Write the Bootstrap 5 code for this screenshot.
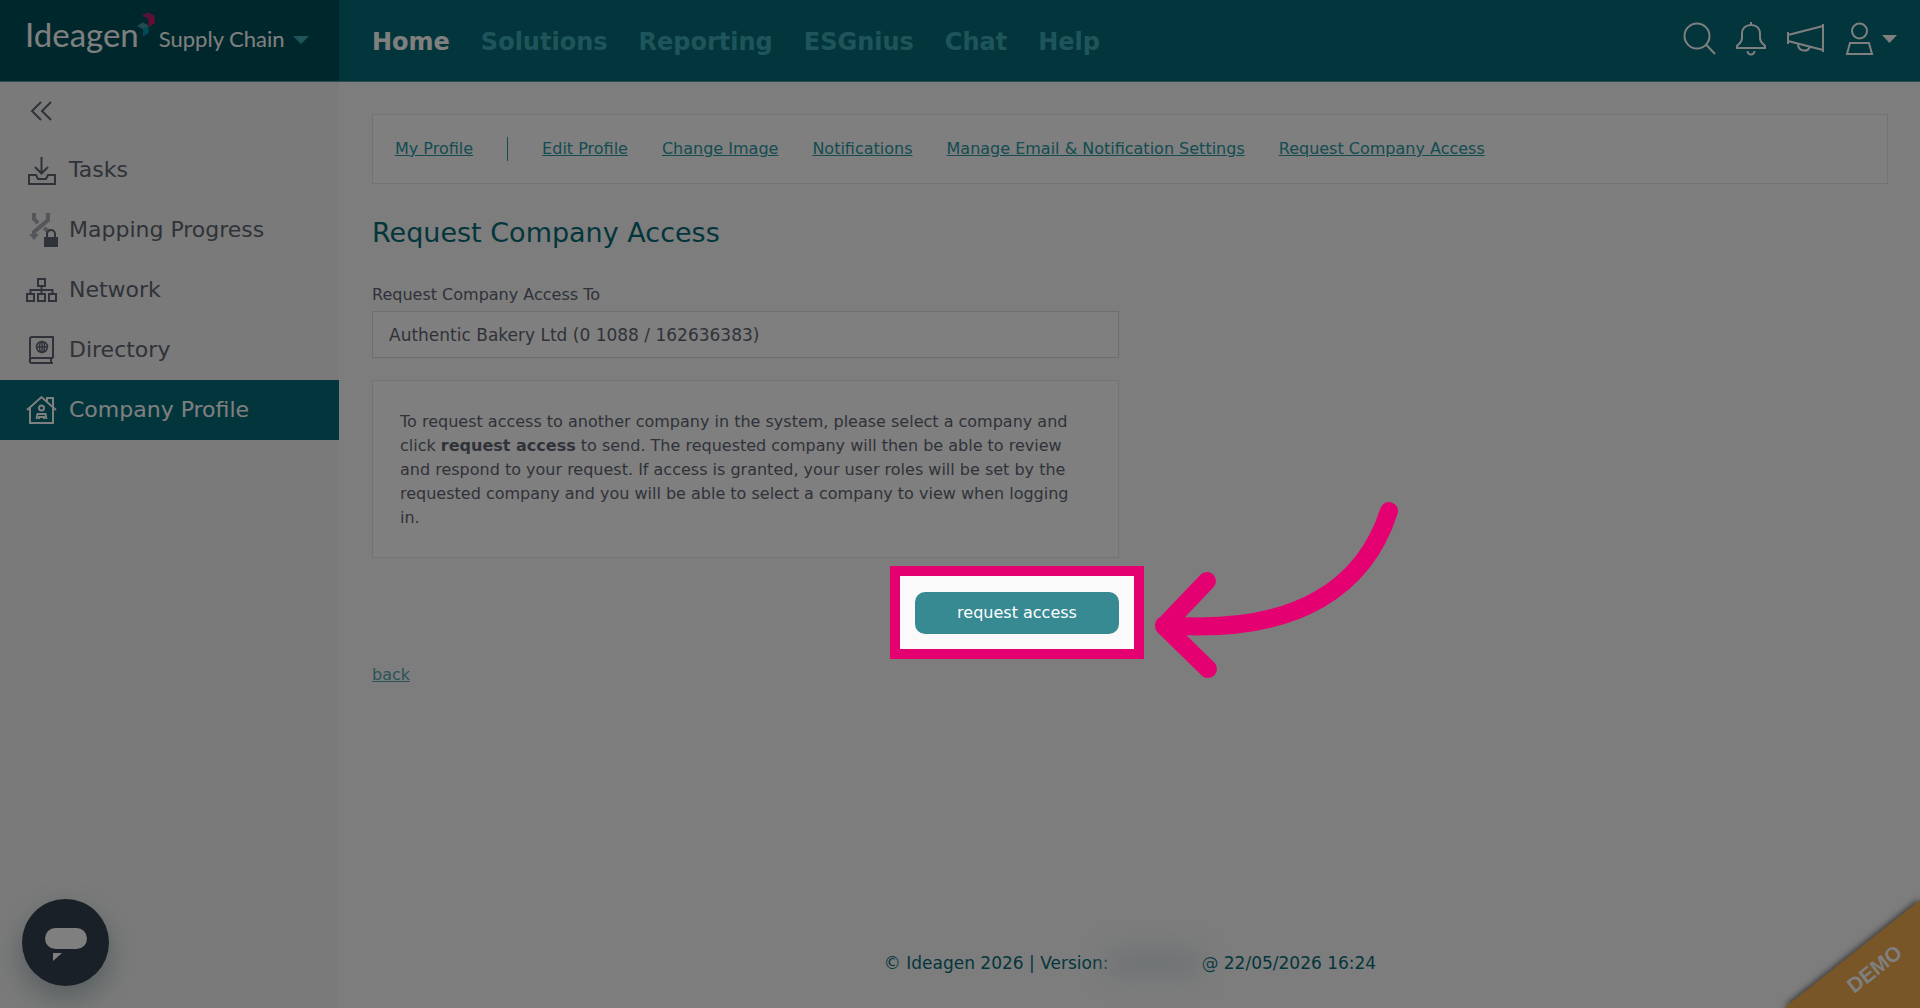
<!DOCTYPE html>
<html lang="en">
<head>
<meta charset="utf-8">
<meta name="viewport" content="width=device-width, initial-scale=1">
<title>Request Company Access</title>
<link href="https://cdn.jsdelivr.net/npm/bootstrap@5.3.0/dist/css/bootstrap.min.css" rel="stylesheet">
<style>
  :root { --teal: #378992; --bright: #3cabb4; --deep: #066c78; --ink: #5f6673; --line: #e6e6e6; }
  body { font-family: "DejaVu Sans", Verdana, sans-serif; font-size: 16px; line-height: 24px; color: var(--ink); background: #fafafa; }
  svg { fill: none; stroke: currentColor; display: block; flex: none; }
  svg.solid { stroke: none; }
  .topbar { height: 82px; background: var(--deep); border-bottom: 1px solid #509ca4; }
  .brand { width: 339px; background: #005058; color: #fff; text-decoration: none; font-family: Lato, sans-serif; padding: 11px 0 0 25px; }
  .brand-main { font-size: 33px; line-height: 40px; }
  .brand-sub { font-size: 22px; line-height: 32px; }
  .cubes { margin: 0 3px 0 -2px; }
  .topnav { gap: 31px; padding: 2px 0 0 33px; font-size: 24px; font-weight: 700; }
  .topnav a { color: var(--bright); text-decoration: none; }
  .topnav a.active { color: #fff; }
  .tools { gap: 20px; padding: 0 23px 3px 0; }
  .tools button, .fold { background: none; border: 0; padding: 0; color: #fff; }
  .side { width: 339px; background: #f4f4f4; }
  .fold { height: 58px; padding-left: 26px; color: var(--ink); }
  .side a { height: 60px; padding-left: 25px; gap: 10px; font-size: 22px; color: var(--ink); text-decoration: none; }
  .side a.active { background: var(--deep); color: #fff; }
  .content { padding: 32px 32px 30px 33px; }
  .subnav { background: #fff; border: 1px solid var(--line); gap: 10px 34px; padding: 22px; }
  .subnav a { color: #2898a4; }
  .rule { width: 1px; height: 24px; background: #2898a4; }
  h1 { font-size: 27px; line-height: 36px; color: var(--deep); margin: 31px 0 32px; }
  .request { max-width: 747px; }
  .request .form-label { margin-bottom: 4px; }
  .request .form-control { height: 47px; border-radius: 0; border-color: #dcdcdc; padding: 1px 16px 0; font-size: 17px; color: var(--ink); background: #fff; }
  .note { background: #fff; border: 1px solid var(--line); padding: 29px 27px 27px; margin: 22px 0 34px; }
  .spot { z-index: 50; width: 204px; }
  .spot::after { content: ""; position: absolute; inset: -26px -25px -25px; border: 10px solid #e50072; box-shadow: 0 0 0 4000px rgba(0,0,0,.5); pointer-events: none; }
  .spot .btn { height: 42px; padding: 0; font-size: 16px; color: #fff; background: var(--teal); border: 0; border-radius: 10px; }
  .spot svg { position: absolute; left: 235px; top: -97px; color: #e50072; z-index: 1; }
  .back { margin-top: 29px; color: #55a9b0; }
  .foot { color: var(--deep); font-size: 17px; }
  .smudge { width: 93px; height: 30px; background: #dfe6e9; filter: blur(12px); }
  .chat { position: fixed; left: 22px; bottom: 22px; width: 87px; height: 87px; border: 0; border-radius: 50%; background: #324150; z-index: 10; box-shadow: 0 12px 28px rgba(40,80,85,.35); color: #fff; padding: 4px 0 0; }
  .demo { position: fixed; right: 0; bottom: 0; z-index: 10; filter: drop-shadow(-1px -1px 3px rgba(0,0,0,.6)); }
  .demo text { font: 700 21px "Liberation Sans", Arial, sans-serif; }
</style>
</head>
<body class="d-flex flex-column min-vh-100">
<header class="topbar d-flex">
  <a class="brand d-flex align-items-baseline" href="#">
    <span class="brand-main">Ideagen</span>
    <svg class="cubes solid" width="19" height="36" viewBox="137 11 19 36"><path d="M142.500 15.500l5.500-3 6.500 3v8l-6 3.500v-8z" fill="#d0186c"/><path d="M142.500 15.500l5.500-3 6.500 3-6 3.500z" fill="#a8286e"/><path d="M137 26l6-3.500 5.500 3v7.500l-5.500 3.500v-7.500z" fill="#0098ac"/><path d="M137 26l6-3.500 5.500 3-5.500 3.500z" fill="#4496a0"/></svg>
    <span class="brand-sub">Supply Chain</span>
    <svg class="solid ms-2" width="16" height="12" viewBox="0 0 16 12"><path d="M0 1h16L8 9z" fill="#3cabb4"/></svg>
  </a>
  <nav class="topnav d-flex align-items-center">
    <a class="active" href="#">Home</a><a href="#">Solutions</a><a href="#">Reporting</a><a href="#">ESGnius</a><a href="#">Chat</a><a href="#">Help</a>
  </nav>
  <div class="tools d-flex align-items-center ms-auto">
    <button type="button" aria-label="Search"><svg width="34" height="34" viewBox="0 0 34 34" stroke-width="2"><circle cx="15" cy="14" r="12.500"/><path d="M24 22.500l9 9.500"/></svg></button>
    <button type="button" aria-label="Alerts"><svg width="30" height="34" viewBox="0 0 30 34" stroke-width="2"><path d="M15 0v3M1 26v-2c3-3 5-4 5-8v-4c0-6 4-9 9-9s9 3 9 9v4c0 4 2 5 5 8v2zM11.500 29a3.500 3.500 0 0 0 7 0"/></svg></button>
    <button type="button" aria-label="News"><svg width="39" height="34" viewBox="0 0 39 34" stroke-width="2"><path d="M2 10v12M37 2v28M2 13l35-9M2 19l35 9M12 22c0 7 9 9 12 3"/></svg></button>
    <button type="button" class="d-flex align-items-center gap-2" aria-label="Account"><svg width="29" height="34" viewBox="0 0 29 34" stroke-width="2"><circle cx="14.500" cy="9" r="7.500"/><path d="M5 21h19l3 11H2z"/></svg><svg class="solid" width="15" height="8" viewBox="0 0 15 8"><path d="M0 0h15L7.500 8z" fill="#fff"/></svg></button>
  </div>
</header>
<div class="d-flex flex-grow-1">
  <aside class="side flex-shrink-0">
    <button class="fold d-flex align-items-center" type="button" aria-label="Collapse menu"><svg class="ms-1" width="24" height="20" viewBox="0 0 24 20" stroke-width="2"><path d="M11 1L2 10l9 9M21 1l-9 9 9 9"/></svg></button>
    <nav>
      <a href="#" class="d-flex align-items-center"><svg width="34" height="32" viewBox="0 0 34 32" stroke-width="2"><path d="M16.500 3v16M10 13l6.500 6.500L23 13M11 21H4v9h26v-9h-7l-2 4h-8z"/></svg>Tasks</a>
      <a href="#" class="d-flex align-items-center"><svg width="34" height="36" viewBox="0 0 34 36"><g stroke="#a9adb3" stroke-width="4"><path d="M9 1v6l4 4M23 1v7L9 20v5M19 16l5 4"/><path d="M4 22h10l-5 6z" fill="#a9adb3" stroke="none"/></g><path d="M19 25h14v10H19z" fill="currentColor" stroke="none"/><path d="M22 25v-3a4 4 0 0 1 8 0v3" stroke-width="2"/></svg>Mapping Progress</a>
      <a href="#" class="d-flex align-items-center"><svg width="34" height="32" viewBox="0 0 34 32" stroke-width="2"><path d="M13 5h7v7h-7zM2 20h7v7H2zM13 20h7v7h-7zM24 20h7v7h-7zM16.500 12v8M5.500 20v-4h22v4"/></svg>Network</a>
      <a href="#" class="d-flex align-items-center"><svg width="34" height="32" viewBox="0 0 34 32" stroke-width="2"><path d="M28 24H7c-3 0-3 5 0 5h21M26 24v5M5 27V5q0-2 2-2h21v21"/><g stroke-width="1.500"><circle cx="17" cy="13" r="5.500"/><ellipse cx="17" cy="13" rx="2.500" ry="5.500"/><path d="M11.500 13h11M17 8v11"/></g></svg>Directory</a>
      <a href="#" class="d-flex align-items-center active"><svg width="34" height="32" viewBox="0 0 34 32" stroke-width="2"><path d="M2 16L16.500 3 31 16M5 14v15h23V14M22 7V4h6v9"/><circle cx="16.500" cy="14" r="2.500"/><path d="M11.500 25l1-5h8l1 5M14 25v-2h5v2"/></svg>Company Profile</a>
    </nav>
  </aside>
  <main class="content flex-grow-1 d-flex flex-column">
    <nav class="subnav d-flex flex-wrap align-items-center">
      <a href="#">My Profile</a><span class="rule"></span><a href="#">Edit Profile</a><a href="#">Change Image</a><a href="#">Notifications</a><a href="#">Manage Email &amp; Notification Settings</a><a href="#">Request Company Access</a>
    </nav>
    <h1>Request Company Access</h1>
    <form class="request">
      <label class="form-label d-block" for="company">Request Company Access To</label>
      <input class="form-control" id="company" type="text" value="Authentic Bakery Ltd (0 1088 / 162636383)">
      <div class="note">To request access to another company in the system, please select a company and click <b>request access</b> to send. The requested company will then be able to review and respond to your request. If access is granted, your user roles will be set by the requested company and you will be able to select a company to view when logging in.</div>
      <div class="spot position-relative ms-auto">
        <button class="btn w-100" type="button">request access</button>
        <svg width="260" height="190" viewBox="1150 495 260 190" stroke-width="18" stroke-linecap="round" stroke-linejoin="round" aria-hidden="true"><path d="M1389 511C1366 583 1302 636 1164 625M1207 581l-43 45 44 43"/></svg>
      </div>
    </form>
    <a class="back align-self-start" href="#">back</a>
    <footer class="foot d-flex justify-content-center align-items-center mt-auto"><span>© Ideagen 2026 | Version:</span><span class="smudge"></span><span>@ 22/05/2026 16:24</span></footer>
  </main>
</div>
<button class="chat d-flex align-items-center justify-content-center" type="button" aria-label="Open chat"><svg class="solid" width="42" height="34" viewBox="0 0 42 34"><rect width="42" height="21" rx="10.500" fill="#fff"/><path d="M8 25h9l-9 8z" fill="#fff"/></svg></button>
<svg class="demo solid" width="136" height="108" viewBox="0 0 136 108"><path d="M0 108L136 0v108z" fill="#f0ac50"/><text x="70" y="94" transform="rotate(-38 70 94)" fill="#fff">DEMO</text></svg>
<script src="https://cdn.jsdelivr.net/npm/bootstrap@5.3.0/dist/js/bootstrap.bundle.min.js"></script>
</body>
</html>
